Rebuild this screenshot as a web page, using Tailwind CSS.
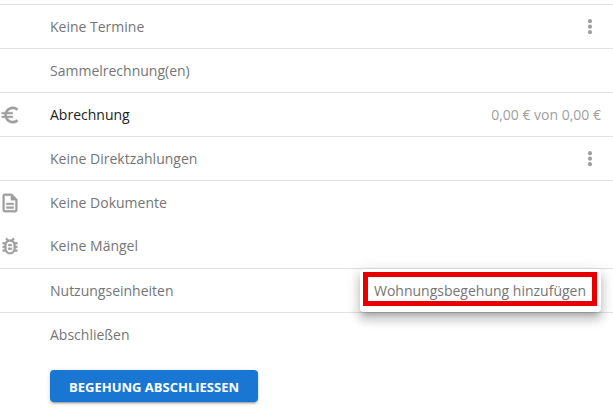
<!DOCTYPE html>
<html lang="de">
<head>
<meta charset="utf-8">
<meta name="viewport" content="width=device-width, initial-scale=1">
<title>Begehung</title>
<script src="https://cdn.jsdelivr.net/npm/@tailwindcss/browser@4"></script>
</head>
<body class="bg-white font-['Open_Sans',sans-serif] text-sm leading-5 text-[#757575]">
<main class="pt-1">
  <ul class="border-t border-[#e0e0e0]">
    <li class="flex h-11 items-center border-b border-[#e0e0e0] pr-3 pl-[50px]">
      <span class="grow">Keine Termine</span>
      <button type="button" aria-label="Menü Termine" class="text-[#9e9e9e]">
        <svg class="size-[22px]" viewBox="0 0 24 24" fill="currentColor"><circle cx="12" cy="5.6" r="2.2"/><circle cx="12" cy="11.6" r="2.2"/><circle cx="12" cy="17.6" r="2.2"/></svg>
      </button>
    </li>
    <li class="flex h-11 items-center border-b border-[#e0e0e0] pr-3 pl-[50px]">
      <span class="grow">Sammelrechnung(en)</span>
    </li>
    <li class="flex h-11 items-center border-b border-[#e0e0e0] pr-3">
      <span class="w-[50px] shrink-0 text-[#9e9e9e]"><svg class="-ml-px size-[22px]" viewBox="0 0 24 24" fill="currentColor" stroke="currentColor" stroke-width=".4"><path d="M15 18.5c-2.51 0-4.68-1.42-5.76-3.5H15v-2H8.58c-.05-.33-.08-.66-.08-1s.03-.67.08-1H15V9H9.24C10.32 6.92 12.5 5.5 15 5.5c1.61 0 3.09.59 4.23 1.57L21 5.3C19.41 3.87 17.3 3 15 3c-3.92 0-7.24 2.51-8.48 6H3v2h3.06c-.04.33-.06.66-.06 1s.02.67.06 1H3v2h3.52c1.24 3.49 4.56 6 8.48 6 2.31 0 4.41-.87 6-2.3l-1.78-1.77c-1.13.98-2.6 1.57-4.22 1.57z"/></svg></span>
      <span class="grow text-[#212121]">Abrechnung</span>
      <span class="text-[#9e9e9e]">0,00 € von 0,00 €</span>
    </li>
    <li class="flex h-11 items-center border-b border-[#e0e0e0] pr-3 pl-[50px]">
      <span class="grow">Keine Direktzahlungen</span>
      <button type="button" aria-label="Menü Direktzahlungen" class="text-[#9e9e9e]">
        <svg class="size-[22px]" viewBox="0 0 24 24" fill="currentColor"><circle cx="12" cy="5.6" r="2.2"/><circle cx="12" cy="11.6" r="2.2"/><circle cx="12" cy="17.6" r="2.2"/></svg>
      </button>
    </li>
    <li class="flex h-11 items-center pr-3">
      <span class="w-[50px] shrink-0 text-[#9e9e9e]"><svg class="-ml-px size-[22px]" viewBox="0 0 24 24" fill="currentColor" stroke="currentColor" stroke-width=".4"><path d="M8 16h8v2H8zm0-4h8v2H8zm6-10H6c-1.1 0-2 .9-2 2v16c0 1.1.89 2 1.99 2H18c1.1 0 2-.9 2-2V8l-6-6zm4 18H6V4h7v5h5v11z"/></svg></span>
      <span class="grow">Keine Dokumente</span>
    </li>
    <li class="flex h-11 items-center border-b border-[#e0e0e0] pr-3 pb-px">
      <span class="w-[50px] shrink-0 text-[#9e9e9e]"><svg class="-ml-px size-[22px]" viewBox="0 0 24 24" fill="currentColor" stroke="currentColor" stroke-width=".4"><path d="M20 8h-2.81c-.45-.78-1.07-1.45-1.82-1.96L17 4.41 15.59 3l-2.17 2.17C12.96 5.06 12.49 5 12 5s-.96.06-1.41.17L8.41 3 7 4.41l1.62 1.63C7.88 6.55 7.26 7.22 6.81 8H4v2h2.09c-.05.33-.09.66-.09 1v1H4v2h2v1c0 .34.04.67.09 1H4v2h2.81c1.04 1.79 2.97 3 5.19 3s4.15-1.21 5.19-3H20v-2h-2.09c.05-.33.09-.66.09-1v-1h2v-2h-2v-1c0-.34-.04-.67-.09-1H20V8zm-4 4v3c0 2.21-1.79 4-4 4s-4-1.79-4-4v-4c0-2.21 1.79-4 4-4s4 1.79 4 4v1zm-6 2h4v2h-4zm0-4h4v2h-4z"/></svg></span>
      <span class="grow">Keine Mängel</span>
    </li>
    <li class="relative flex h-11 items-center border-b border-[#e0e0e0] pl-[50px]">
      <span class="grow">Nutzungseinheiten</span>
      <div role="menu" class="absolute top-0 right-3 w-[241px] rounded bg-white pt-[3px] pr-1 pb-[6px] pl-[3px] shadow-[0_5px_5px_-3px_rgba(0,0,0,0.2),0_8px_10px_1px_rgba(0,0,0,0.14),0_3px_14px_2px_rgba(0,0,0,0.12)]">
        <button type="button" role="menuitem" class="flex h-[34px] w-full items-center justify-center border-5 border-[#e80000] pt-1 whitespace-nowrap">Wohnungsbegehung hinzufügen</button>
      </div>
    </li>
    <li class="flex h-11 items-center pr-3 pl-[50px]">
      <span class="grow">Abschließen</span>
    </li>
  </ul>
  <div class="pt-[13px] pb-3 pl-[50px]">
    <button type="button" class="h-8 w-52 rounded bg-[#1976d2] pt-px text-[13px] font-bold text-white uppercase shadow-[0_3px_1px_-2px_rgba(0,0,0,0.2),0_2px_2px_0_rgba(0,0,0,0.14),0_1px_5px_0_rgba(0,0,0,0.12)]">Begehung abschliessen</button>
  </div>
</main>
</body>
</html>
